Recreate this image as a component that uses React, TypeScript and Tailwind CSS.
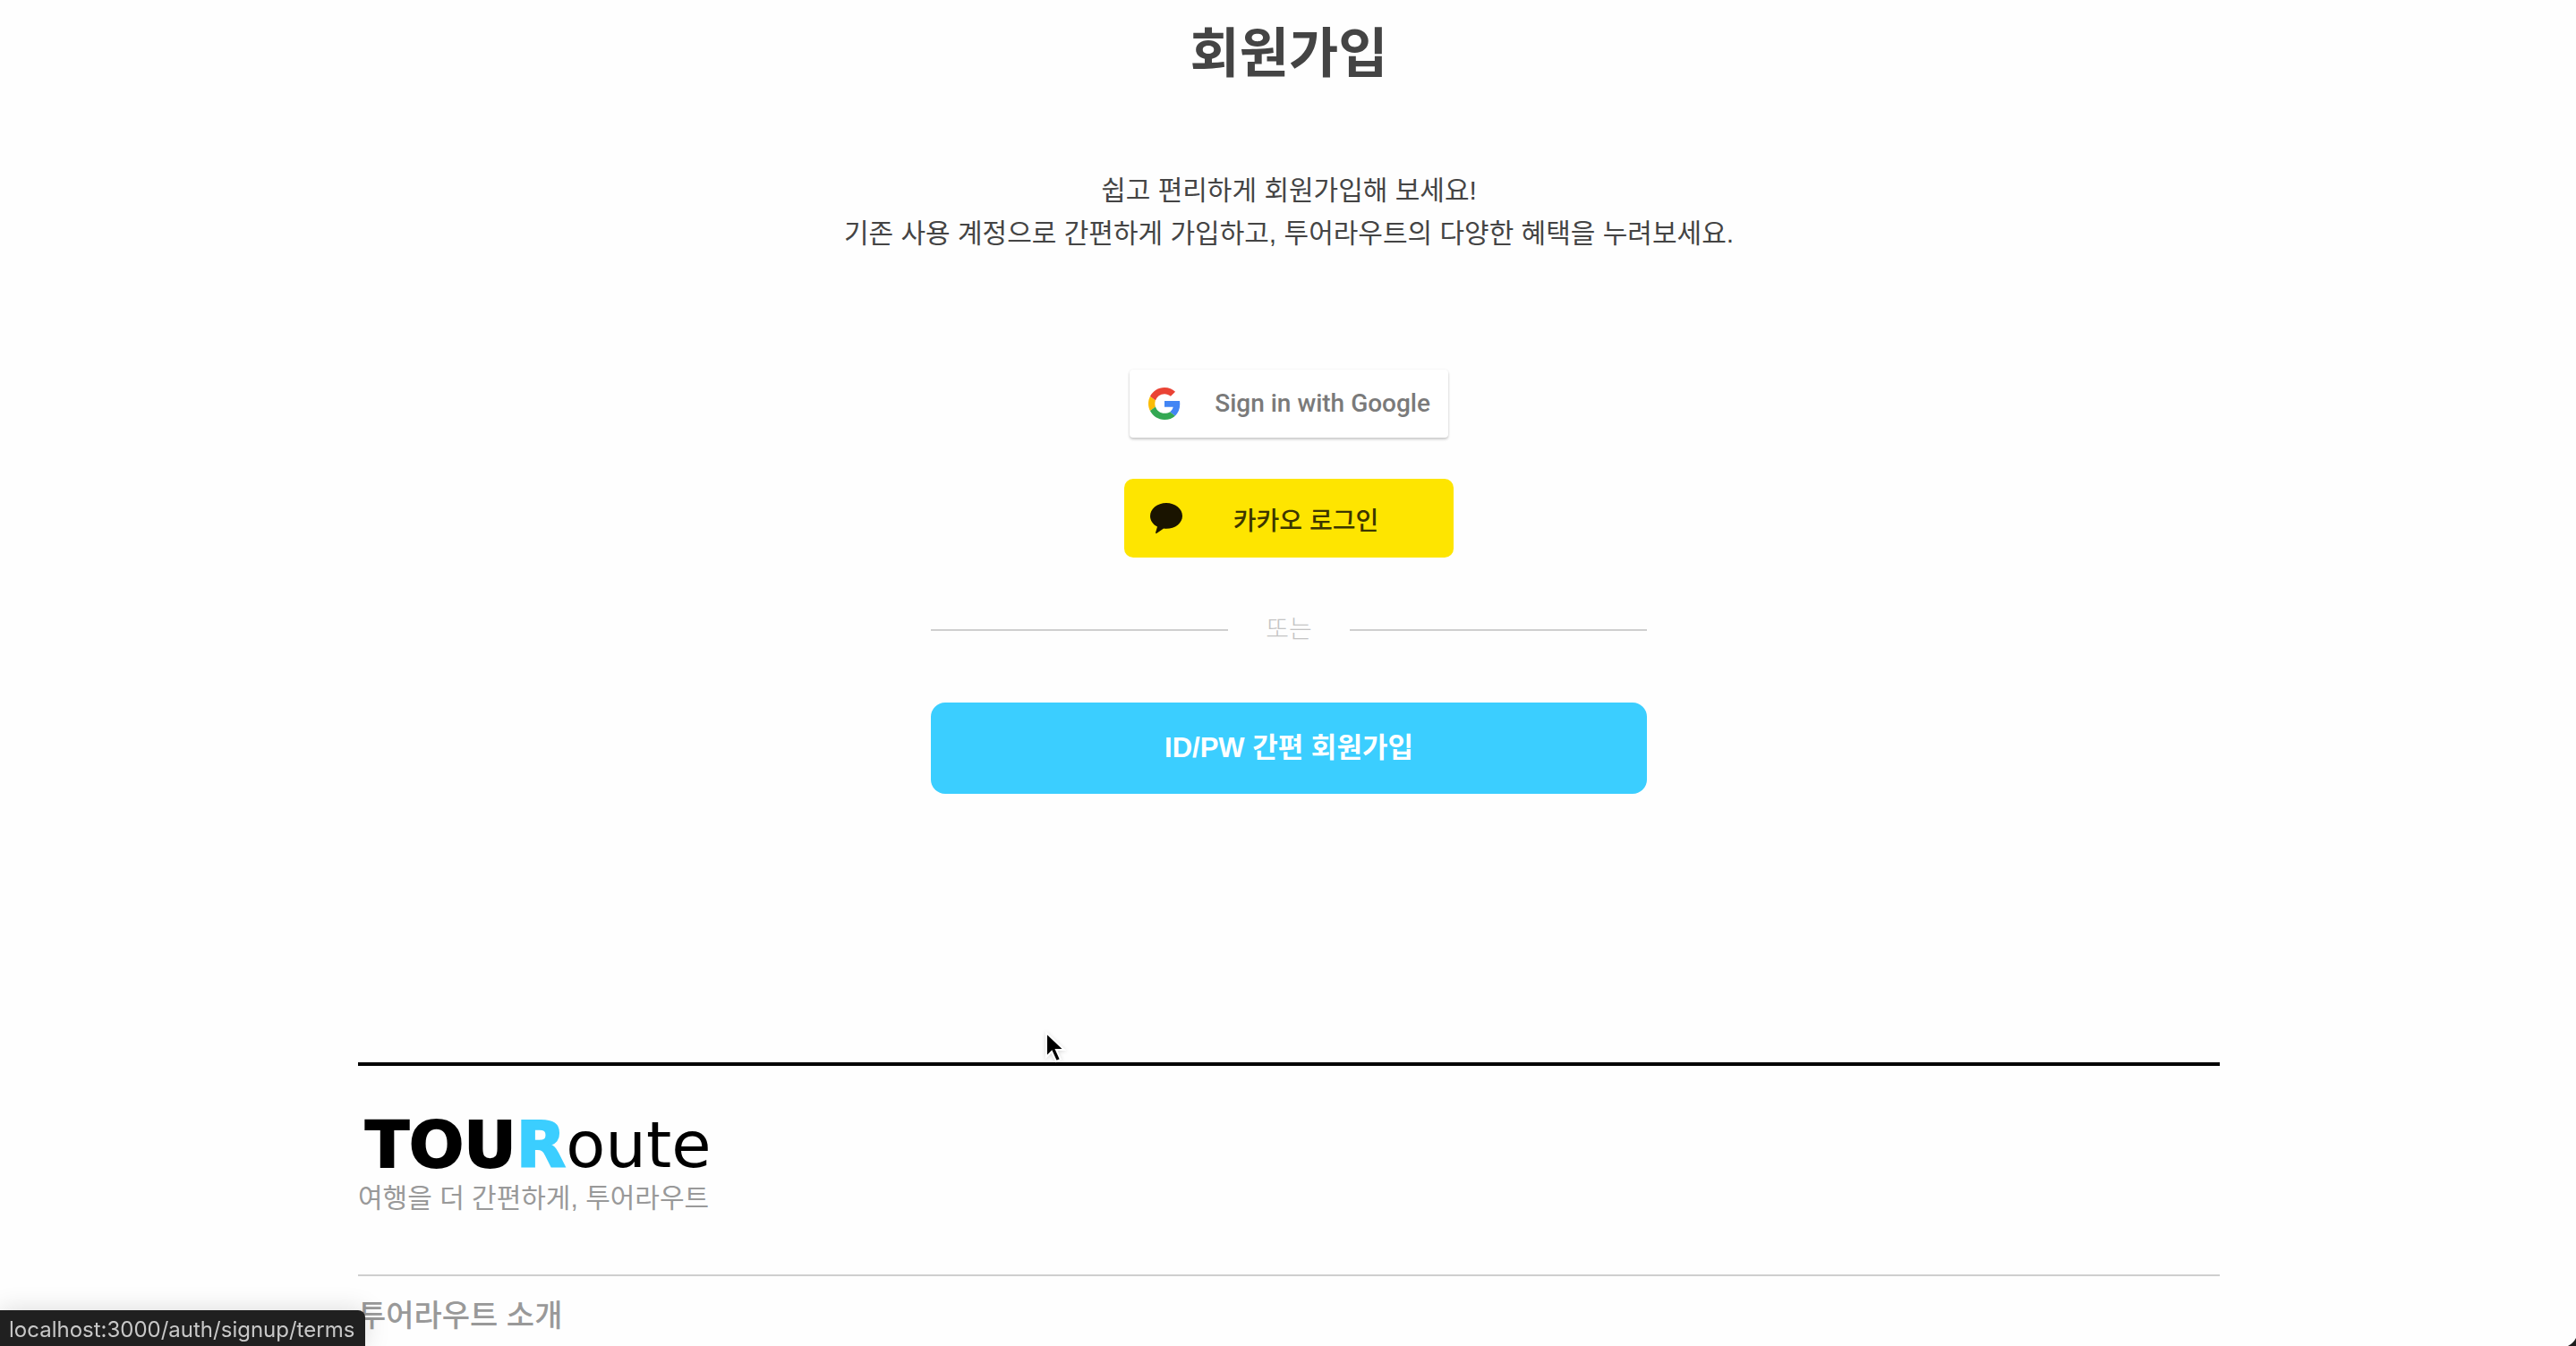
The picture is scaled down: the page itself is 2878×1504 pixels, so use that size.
import React from "react";

function GoogleMark() {
  return (
    <svg viewBox="0 0 48 48" className="size-9 shrink-0" aria-hidden="true">
      <path fill="#EA4335" d="M24 9.5c3.54 0 6.71 1.22 9.21 3.6l6.85-6.85C35.9 2.38 30.47 0 24 0 14.62 0 6.51 5.38 2.56 13.22l7.98 6.19C12.43 13.72 17.74 9.5 24 9.5z" />
      <path fill="#4285F4" d="M46.98 24.55c0-1.57-.15-3.09-.38-4.55H24v9.02h12.94c-.58 2.96-2.26 5.48-4.78 7.18l7.73 6c4.51-4.18 7.09-10.36 7.09-17.65z" />
      <path fill="#FBBC05" d="M10.53 28.59c-.48-1.45-.76-2.99-.76-4.59s.27-3.14.76-4.59l-7.98-6.19C.92 16.46 0 20.12 0 24c0 3.88.92 7.54 2.56 10.78l7.97-6.19z" />
      <path fill="#34A853" d="M24 48c6.48 0 11.93-2.13 15.89-5.81l-7.73-6c-2.15 1.45-4.92 2.3-8.16 2.3-6.26 0-11.57-4.22-13.47-9.91l-7.98 6.19C6.51 42.62 14.62 48 24 48z" />
    </svg>
  );
}

function TalkBubble() {
  return (
    <svg viewBox="0 0 38 36" className="h-9 w-[38px] shrink-0" aria-hidden="true">
      <path fill="#1a1400" d="M19 1C9 1 1 7.600 1 15.700c0 5 3.200 9.300 8 11.900L7 34.200c-.2.700.5 1.200 1.100.8l8-5.400c1 .1 1.900.2 2.900.2 10 0 18-6.500 18-14.400C37 7.600 29 1 19 1z" />
    </svg>
  );
}

export default function App() {
  return (
    <div className="min-h-screen bg-[#fefefe] pl-0.5 font-['Liberation_Sans','Noto_Sans_CJK_KR',sans-serif] text-[#444444]">
      <main className="mx-auto flex w-full max-w-[2080px] flex-col items-center">
        <h1 className="pt-[15px] text-[60px] leading-[92px] font-bold">회원가입</h1>
        <p className="mt-[82px] text-center text-[30px] leading-[48px]">
          쉽고 편리하게 회원가입해 보세요!
          <br />
          기존 사용 계정으로 간편하게 가입하고, 투어라우트의 다양한 혜택을 누려보세요.
        </p>
        <button className="mt-32 flex h-[76px] w-[356px] items-center justify-between rounded-sm bg-white pr-5 pl-[21px] font-['Roboto',sans-serif] text-[28px] font-medium text-[#7a7a7a] shadow-[0_2px_3px_rgba(0,0,0,0.2),0_0_3px_rgba(0,0,0,0.06)]">
          <GoogleMark />
          Sign in with Google
        </button>
        <button className="mt-[46px] flex h-[88px] w-[368px] items-center rounded-[10px] bg-[#fee500] pl-7 text-[#3c3500]">
          <TalkBubble />
          <span className="flex-1 pt-2 pr-7 text-center text-[28px] font-medium">카카오 로그인</span>
        </button>
        <div className="mt-14 flex w-full max-w-[800px] items-center gap-[42px] text-[28px] leading-[50px] font-light text-[#c4c4c4]">
          <span className="h-0.5 flex-1 bg-[#cfcfcf]" />
          또는
          <span className="h-0.5 flex-1 bg-[#cfcfcf]" />
        </div>
        <a href="#terms" className="mt-14 flex h-[102px] w-full max-w-[800px] items-center justify-center rounded-2xl bg-[#3bceff] text-[31px] font-bold text-white">
          ID/PW 간편 회원가입
        </a>
      </main>

      <footer className="mx-auto mt-[300px] w-full max-w-[2080px] border-t-4 border-black text-[#999999]">
        <div className="border-b-2 border-[#cfcfcf] pt-[50px] pb-16">
          <div className="pl-2 font-['DejaVu_Sans',sans-serif] text-[72px] leading-[76px] text-black">
            <span className="font-bold [-webkit-text-stroke:2px_#000000]">TOU</span>
            <span className="font-bold text-[#3bceff] [-webkit-text-stroke:2px_#3bceff]">R</span>
            <span>oute</span>
          </div>
          <p className="text-[30px] leading-[43px]">여행을 더 간편하게, 투어라우트</p>
        </div>
        <h2 className="pt-5 text-[34px] leading-[48px] font-medium">투어라우트 소개</h2>
      </footer>

      <div className="fixed bottom-0 left-0 h-10 rounded-tr-lg bg-[#202020] pt-0.5 pr-3 pl-2.5 font-['Inter',sans-serif] text-[24px] leading-10 text-[#c8c8c8] shadow-[0_0_28px_rgba(0,0,0,0.15)]">
        localhost:3000/auth/signup/terms
      </div>
      <svg viewBox="0 0 9 9" className="fixed right-0 bottom-0 size-[9px]" aria-hidden="true">
        <path d="M9 0v9H0Q6 6 9 0z" fill="#1e1e1e" />
      </svg>
      <svg viewBox="0 0 24 36" className="fixed top-[1152px] left-[1167px] h-9 w-6 drop-shadow-sm" aria-hidden="true">
        <path d="M2 2v27l6-6 5 11 5-2-5-11h9z" fill="#000" stroke="#fff" strokeWidth="2" />
      </svg>
    </div>
  );
}
